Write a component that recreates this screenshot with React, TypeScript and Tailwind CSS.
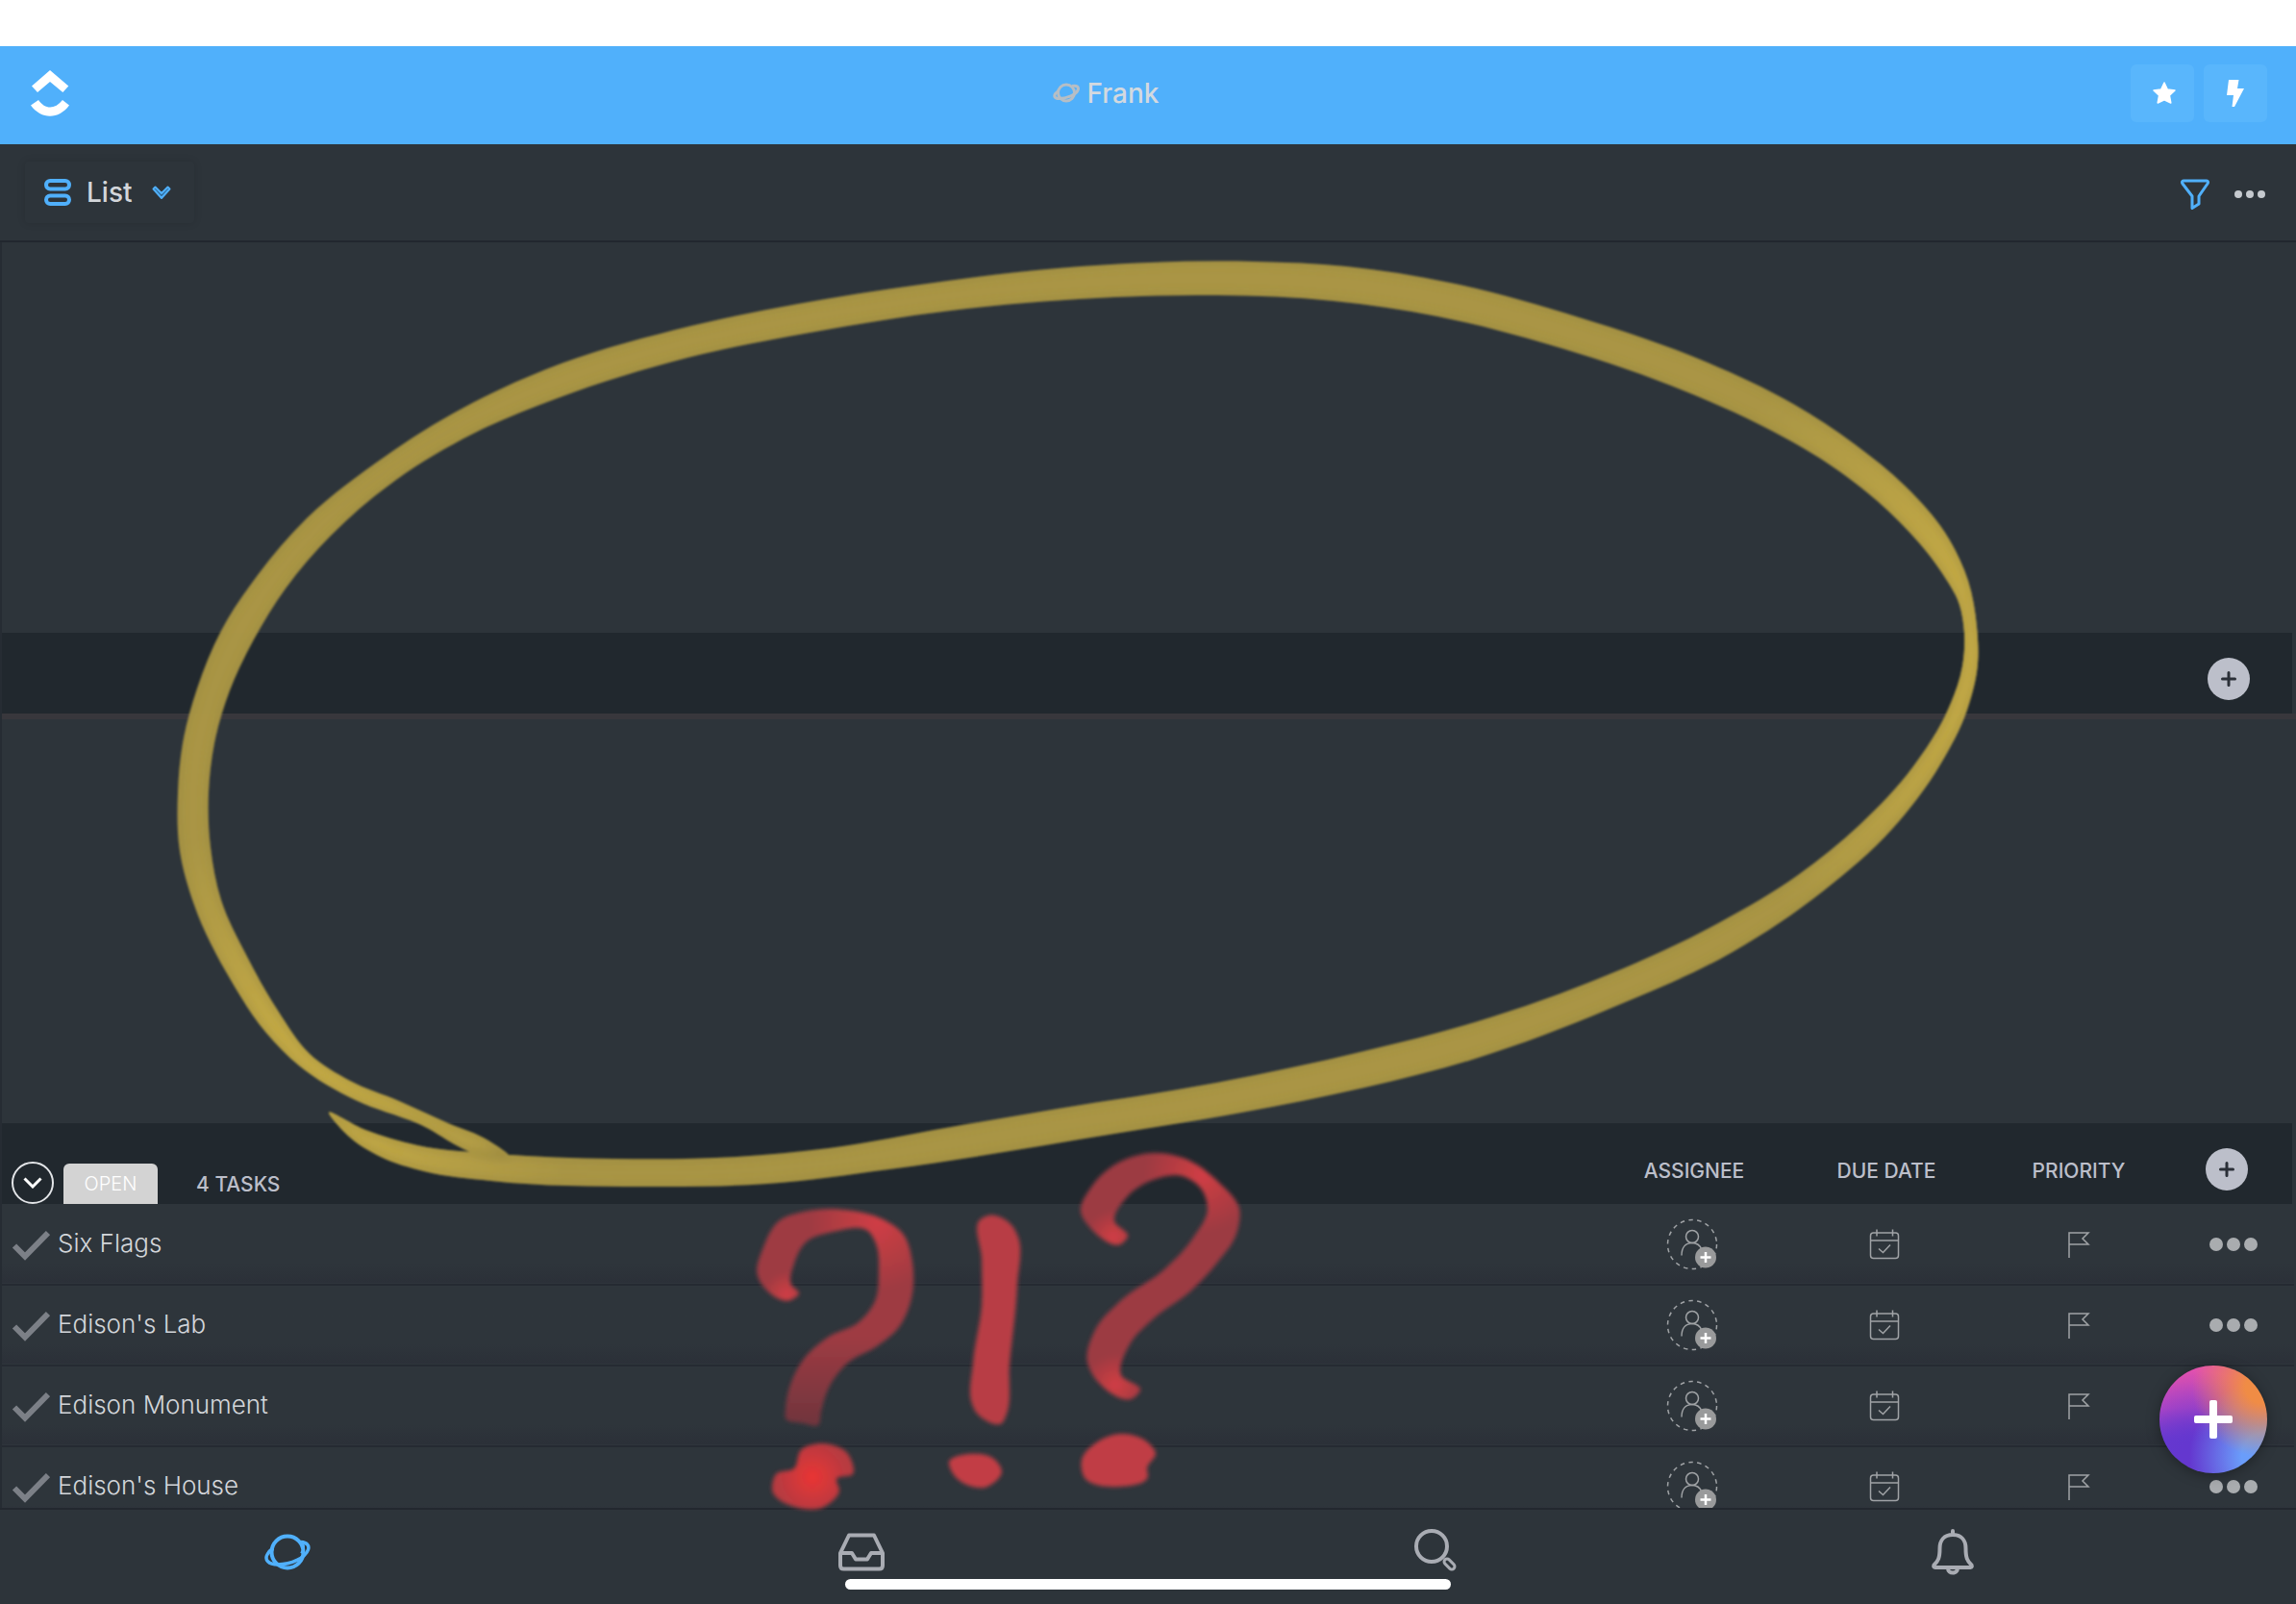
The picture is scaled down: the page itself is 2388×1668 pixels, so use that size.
import { useState } from "react";

type Point = [number, number];

const tasks = ["Six Flags", "Edison's Lab", "Edison Monument", "Edison's House"];

// slope at b, the nearer neighbour counts more
const slope = (a: Point, b: Point, c: Point): Point => {
  const d1 = Math.hypot(b[0] - a[0], b[1] - a[1]);
  const d2 = Math.hypot(c[0] - b[0], c[1] - b[1]);
  const along = (k: 0 | 1) =>
    (((b[k] - a[k]) / d1) * d2 + ((c[k] - b[k]) / d2) * d1) / (d1 + d2);
  return [along(0), along(1)];
};

// closed curve running through every point
const smooth = (p: Point[]) => {
  const n = p.length;
  let d = `M${p[0][0]} ${p[0][1]}`;
  for (let i = 0; i < n; i++) {
    const a = p[(i - 1 + n) % n];
    const b = p[i];
    const c = p[(i + 1) % n];
    const e = p[(i + 2) % n];
    const h = Math.hypot(c[0] - b[0], c[1] - b[1]) / 3;
    const m = slope(a, b, c);
    const k = slope(b, c, e);
    d += ` C${b[0] + m[0] * h} ${b[1] + m[1] * h} ${c[0] - k[0] * h} ${c[1] - k[1] * h} ${c[0]} ${c[1]}`;
  }
  return d + "Z";
};

const loop: Point[] = [
  [342, 1157], [362, 1181], [396, 1203], [441, 1218], [511, 1228], [670, 1234],
  [798, 1231], [925, 1216], [1159, 1179], [1291, 1157], [1419, 1131],
  [1534, 1101], [1674, 1049], [1802, 990], [1897, 926], [1968, 862], [2018, 795],
  [2046, 738], [2057, 690], [2056, 652], [2047, 604], [2023, 554], [1982, 506],
  [1929, 462], [1865, 420], [1776, 377], [1642, 330], [1508, 294], [1400, 277],
  [1304, 272], [1196, 273], [1100, 279], [957, 296], [830, 316], [702, 343],
  [568, 384], [471, 430], [390, 482], [319, 539], [268, 598], [230, 656],
  [205, 716], [190, 773], [185, 824], [187, 885], [202, 941], [240, 1019],
  [277, 1074], [311, 1108], [370, 1144], [434, 1168], [504, 1202], [530, 1203],
  [508, 1186], [466, 1168], [415, 1145], [364, 1124], [322, 1096], [289, 1051],
  [256, 993], [230, 936], [219, 881], [217, 824], [223, 773], [239, 718],
  [264, 665], [297, 612], [344, 557], [412, 499], [492, 451], [580, 414],
  [715, 372], [842, 346], [989, 323], [1159, 309], [1259, 307], [1387, 313],
  [1495, 329], [1610, 358], [1738, 401], [1833, 443], [1913, 490], [1975, 542],
  [2018, 593], [2038, 629], [2043, 658], [2041, 693], [2026, 738], [1990, 797],
  [1934, 858], [1870, 910], [1789, 959], [1674, 1013], [1534, 1063], [1419, 1093],
  [1259, 1127], [1100, 1153], [989, 1172], [862, 1194], [766, 1203], [638, 1205],
  [517, 1200], [434, 1191], [380, 1175],
];

const hookLeft: Point[] = [
  [831, 1345], [822, 1352], [794, 1338], [788, 1327], [794, 1297], [811, 1269],
  [836, 1260], [885, 1259], [916, 1267], [939, 1283], [949, 1313], [948, 1350],
  [935, 1380], [912, 1400], [882, 1417], [862, 1443], [854, 1468], [851, 1482],
  [835, 1480], [817, 1475], [817, 1465], [822, 1440], [836, 1413], [862, 1390],
  [893, 1375], [910, 1353], [914, 1323], [911, 1293], [904, 1281], [866, 1281],
  [838, 1292], [826, 1314], [823, 1336],
];

const bar: Point[] = [
  [1021, 1267], [1028, 1264], [1053, 1275], [1058, 1284], [1058, 1337], [1050, 1420],
  [1046, 1473], [1043, 1479], [1014, 1467], [1011, 1460], [1012, 1417], [1021, 1357],
  [1021, 1310],
];

const hookRight: Point[] = [
  [1173, 1286], [1167, 1293], [1134, 1277], [1124, 1260], [1136, 1233], [1165, 1208],
  [1199, 1199], [1230, 1204], [1268, 1230], [1289, 1257], [1286, 1283], [1266, 1313],
  [1238, 1343], [1200, 1371], [1175, 1398], [1166, 1430], [1186, 1446], [1180, 1453],
  [1138, 1432], [1131, 1417], [1139, 1383], [1165, 1353], [1211, 1320], [1241, 1287],
  [1256, 1257], [1250, 1237], [1230, 1223], [1199, 1227], [1172, 1245], [1159, 1270],
];

const dots: Point[][] = [
  [
    [855, 1501], [882, 1512], [887, 1533], [870, 1538], [873, 1550], [857, 1567],
    [803, 1548], [807, 1533], [826, 1527], [833, 1508],
  ],
  [[987, 1520], [1008, 1512], [1036, 1519], [1042, 1530], [1027, 1546], [993, 1535]],
  [
    [1167, 1491], [1195, 1501], [1202, 1511], [1193, 1527], [1194, 1535], [1165, 1546],
    [1127, 1535], [1125, 1518], [1142, 1499],
  ],
];

function Glow({ id, color, cx, cy, r }: { id: string; color: string; cx: number; cy: number; r: number }) {
  return (
    <radialGradient id={id} gradientUnits="userSpaceOnUse" cx={cx} cy={cy} r={r}>
      <stop offset="0" stopColor={color} />
      <stop offset="0.3" stopColor={color} stopOpacity="0.7" />
      <stop offset="1" stopColor={color} stopOpacity="0" />
    </radialGradient>
  );
}

function Scribble() {
  const ring = smooth(loop);
  const left = smooth(hookLeft);
  const right = smooth(hookRight);
  return (
    <svg
      className="absolute inset-0 w-full h-full pointer-events-none"
      viewBox="0 0 2388 1668"
      preserveAspectRatio="none"
      aria-hidden="true"
    >
      <defs>
        <filter id="soft">
          <feGaussianBlur stdDeviation="1.2" />
        </filter>
        <filter id="softer">
          <feGaussianBlur stdDeviation="2" />
        </filter>
        <filter id="core">
          <feGaussianBlur stdDeviation="4" />
        </filter>
        <clipPath id="ring">
          <path d={ring} />
        </clipPath>
        <Glow id="g1" color="#c9ae46" cx={2060} cy={670} r={340} />
        <Glow id="g2" color="#c9ae46" cx={320} cy={1130} r={280} />
        <Glow id="r1" color="#cf3d44" cx={912} cy={1272} r={70} />
        <Glow id="r2" color="#cf3d44" cx={818} cy={1346} r={24} />
        <Glow id="r3" color="#d03d44" cx={1250} cy={1222} r={60} />
        <Glow id="r4" color="#d03d44" cx={1158} cy={1286} r={28} />
        <Glow id="r5" color="#d03d44" cx={1160} cy={1440} r={32} />
        <Glow id="r6" color="#ea3534" cx={845} cy={1536} r={36} />
        <linearGradient id="fade" gradientUnits="userSpaceOnUse" x1="0" y1="1390" x2="0" y2="1485">
          <stop offset="0" stopColor="#9e3b43" />
          <stop offset="1" stopColor="#6f353d" />
        </linearGradient>
      </defs>
      <g filter="url(#soft)">
        <path d={ring} fill="#ad9945" fillOpacity="0.97" />
        <path d={ring} fill="url(#g1)" />
        <path d={ring} fill="url(#g2)" />
        <g clipPath="url(#ring)">
          <path d={ring} fill="none" stroke="#8f7f3c" strokeOpacity="0.45" strokeWidth="6" filter="url(#core)" />
        </g>
      </g>
      <g filter="url(#softer)">
        <path d={left} fill="url(#fade)" />
        <path d={left} fill="url(#r1)" />
        <path d={left} fill="url(#r2)" />
        <path d={smooth(bar)} fill="#b83d45" />
        <path d={right} fill="#9c3a42" />
        <path d={right} fill="url(#r3)" />
        <path d={right} fill="url(#r4)" />
        <path d={right} fill="url(#r5)" />
        <path d={smooth(dots[0])} fill="#b83a40" />
        <path d={smooth(dots[0])} fill="url(#r6)" />
        <path d={smooth(dots[1])} fill="#c23e45" />
        <path d={smooth(dots[2])} fill="#c03e45" />
      </g>
    </svg>
  );
}

function SpacesIcon() {
  return (
    <svg className="w-12 h-10" viewBox="0 0 48 40" fill="none" stroke="currentColor">
      <circle cx="24" cy="20" r="16.500" strokeWidth="4" />
      <path
        d="M38 9.500C44 10 47 13 45.500 17.500 42.500 26 28 33 14 33 4 33 0 28 3 22.500 4 20.500 6 18 9 16"
        strokeWidth="3.500"
      />
      <path d="M38 9.500C42 12 42 16 38 21M9 16C7 21 8 27 12 31" strokeWidth="2" />
    </svg>
  );
}

function PlanetIcon() {
  return (
    <svg className="w-7 h-6" viewBox="0 0 28 24" fill="none" stroke="#b6bec5" strokeWidth="3">
      <circle cx="14" cy="11.500" r="8.500" />
      <path d="M20 4.500C25 3.500 27.500 5.500 26 9 23.500 14 14 17.500 6.500 17.500 2 17.500.500 15 3 12L6 9.500" />
    </svg>
  );
}

function AddColumn({ label }: { label: string }) {
  return (
    <button
      aria-label={label}
      className="w-11 h-11 rounded-full bg-[#bcbfca] inline-flex items-center justify-center"
    >
      <svg className="w-4 h-4" viewBox="0 0 16 16" stroke="#2b3038" strokeWidth="3" strokeLinecap="round">
        <path d="M8 1.500v13M1.500 8h13" />
      </svg>
    </button>
  );
}

function Assignee() {
  return (
    <svg className="w-14 h-14" viewBox="0 0 56 56" fill="none">
      <circle cx="28" cy="28" r="25.500" stroke="#a0a3a6" strokeWidth="1.500" strokeDasharray="4.500 4.400" />
      <circle cx="28" cy="20" r="6.500" stroke="#a0a3a6" strokeWidth="1.500" />
      <path d="M17 39.500c0-8 4-13 11-13 5 0 8 2 10 7" stroke="#a0a3a6" strokeWidth="1.500" />
      <circle cx="42" cy="41.500" r="11" fill="#999a9b" />
      <path d="M42 36v11M36.500 41.500h11" stroke="#fff" strokeWidth="2.500" />
    </svg>
  );
}

function TaskRow({ name }: { name: string }) {
  return (
    <tr className="h-21 bg-linear-to-b from-[#2e353b] from-75% to-[#2b3038] border-b-2 border-[#252a32]">
      <td className="pl-[10px]">
        <div className="flex items-center gap-2 pb-[2px]">
          <button aria-label={`Complete ${name}`}>
            <svg className="w-10 h-8 mt-1" viewBox="0 0 40 32" fill="none" stroke="#7c8087" strokeWidth="6">
              <path d="M3 16.500 14 27.500 38 3" />
            </svg>
          </button>
          <span className="text-[26px] leading-8 font-light text-[#d3d6da]">{name}</span>
        </div>
      </td>
      <td className="text-center">
        <button aria-label="Assign" className="block mx-auto">
          <Assignee />
        </button>
      </td>
      <td>
        <button aria-label="Set due date" className="block mx-auto">
          <svg className="w-8 h-8" viewBox="0 0 32 32" fill="none" stroke="#a0a3a6" strokeWidth="1.500">
            <rect x="1.500" y="4" width="29" height="26.500" rx="3" />
            <path d="M1.500 12h29M8 .5v7M24.500.5v7M10 20.500l4.500 4 7.500-8" />
          </svg>
        </button>
      </td>
      <td className="pl-1">
        <button aria-label="Set priority" className="block mx-auto">
          <svg className="w-6 h-7" viewBox="0 0 24 28" fill="none" stroke="#a0a3a6" strokeWidth="1.500">
            <path d="M2 28V2h20l-6 6 6 6H2" />
          </svg>
        </button>
      </td>
      <td>
        <button aria-label="More" className="flex gap-1 mx-auto">
          <span className="w-[14px] h-[14px] rounded-full bg-[#a9acaf]" />
          <span className="w-[14px] h-[14px] rounded-full bg-[#a9acaf]" />
          <span className="w-[14px] h-[14px] rounded-full bg-[#a9acaf]" />
        </button>
      </td>
    </tr>
  );
}

function App() {
  const [open, setOpen] = useState(true);
  return (
    <div className="relative h-screen flex flex-col overflow-hidden bg-[#2d343a] font-['Inter',sans-serif]">
      <div className="h-12 shrink-0 bg-white" />
      <header className="h-[102px] shrink-0 bg-[#50b0fb] flex items-center pl-8 pr-[30px] pb-1">
        <button aria-label="Home">
          <svg className="w-10 h-12" viewBox="0 0 40 48" fill="#fff">
            <path d="M20 0 39.300 16.500 33.300 23 20 12 7 23 1 16.500z" />
            <path d="M8 31C15 41 25 41 33 31L40 36.500C29 51.500 11 51.500 0 36.500z" />
          </svg>
        </button>
        <div className="flex-1 flex items-center justify-center gap-2 pl-3 text-[#d3d9df]">
          <PlanetIcon />
          <h1 className="text-[28px] leading-8 font-medium">Frank</h1>
        </div>
        <div className="flex gap-[10px]">
          <button
            aria-label="Favorites"
            className="w-[66px] h-[60px] pl-1 rounded-md bg-[#59b6fc] flex items-center justify-center"
          >
            <svg
              className="w-6 h-6"
              viewBox="0 0 24 24"
              fill="#fff"
              stroke="#fff"
              strokeWidth="1.500"
              strokeLinejoin="round"
            >
              <path d="M12 1l3.300 7 7.700 1-5.600 5.300 1.400 7.700L12 18.800 5.200 22l1.400-7.700L1 9l7.700-1z" />
            </svg>
          </button>
          <button
            aria-label="Quick actions"
            className="w-[66px] h-[60px] rounded-md bg-[#59b6fc] flex items-center justify-center"
          >
            <svg className="w-[18px] h-7" viewBox="0 0 18 28" fill="#fff">
              <path d="M2 0h10.500L11 9h7L8 28H5.500l1.500-12H0z" />
            </svg>
          </button>
        </div>
      </header>

      <div className="h-[102px] shrink-0 flex items-center justify-between pl-[26px] pr-8 border-b-2 border-[#21272e]">
        <button className="flex items-center h-16 w-44 pl-5 rounded shadow-[0_0_8px_rgba(0,0,0,0.12)]">
          <svg className="w-7 h-7" viewBox="0 0 28 28" fill="none" stroke="#50b0fb" strokeWidth="4">
            <rect x="2" y="2" width="24" height="8.500" rx="4.200" />
            <rect x="2" y="17.500" width="24" height="8.500" rx="4.200" />
          </svg>
          <span className="ml-4 text-[28px] leading-8 font-medium text-[#d3d6da]">List</span>
          <svg
            className="ml-5 w-5 h-4"
            viewBox="0 0 20 16"
            fill="#2f6b99"
            stroke="#50b0fb"
            strokeWidth="2"
            strokeLinejoin="round"
          >
            <path d="M1.500 4.500 3.500 2.500 10 9l6.500-6.500 2 2L10 14z" />
          </svg>
        </button>
        <div className="flex items-center gap-[26px] pt-1">
          <button aria-label="Filter">
            <svg
              className="w-[30px] h-8"
              viewBox="0 0 30 32"
              fill="none"
              stroke="#50b0fb"
              strokeWidth="3"
              strokeLinejoin="round"
            >
              <path d="M3 2h24c1.500 0 2 1.500 1 3L19 18v8l-7 4.500V18L2 5C1 3.500 1.500 2 3 2z" />
            </svg>
          </button>
          <button aria-label="View options" className="flex gap-1">
            <span className="w-2 h-2 rounded-full bg-[#c5c9ce]" />
            <span className="w-2 h-2 rounded-full bg-[#c5c9ce]" />
            <span className="w-2 h-2 rounded-full bg-[#c5c9ce]" />
          </button>
        </div>
      </div>

      <main className="flex-1 min-h-0 overflow-hidden border-l-2 border-[#262c33]">
        <div className="h-[406px]" />
        <div className="h-21 mr-1 pr-11 bg-[#21282e] flex items-center justify-end pt-3">
          <AddColumn label="Add column" />
        </div>
        <div className="h-[426px] border-t-6 border-[#38373c]" />
        <table className="w-full table-fixed border-collapse">
          <colgroup>
            <col />
            <col className="w-[200px]" />
            <col className="w-[200px]" />
            <col className="w-[200px]" />
            <col className="w-[126px]" />
          </colgroup>
          <thead>
            <tr className="h-21 bg-[#21282e] text-[21px] leading-6 text-[#bcbfca]">
              <th className="align-bottom">
                <div className="flex items-end pl-[10px]">
                  <button
                    aria-label="Toggle group"
                    aria-expanded={open}
                    onClick={() => setOpen(!open)}
                    className="w-11 h-11 rounded-full border-2 border-[#e3e5e8] flex items-center justify-center"
                  >
                    <svg className="w-5 h-3" viewBox="0 0 20 12" fill="none" stroke="#fff" strokeWidth="3">
                      <path d="M1.500 1.500 10 10l8.500-8.500" />
                    </svg>
                  </button>
                  <span className="ml-[10px] w-[98px] h-[42px] rounded-t-md bg-[#d3d3d3] text-white text-[20px] font-light flex items-center justify-center">
                    OPEN
                  </span>
                  <span className="ml-10 h-8 font-medium">4 TASKS</span>
                </div>
              </th>
              <th className="font-medium pt-4 pl-1">ASSIGNEE</th>
              <th className="font-medium pt-4 pl-1">DUE DATE</th>
              <th className="font-medium pt-4 pl-1">PRIORITY</th>
              <th className="pt-3 pr-3 border-r-4 border-[#2d343a]">
                <div className="flex justify-center">
                  <AddColumn label="Add column to Open" />
                </div>
              </th>
            </tr>
          </thead>
          <tbody>{open && tasks.map((name) => <TaskRow key={name} name={name} />)}</tbody>
        </table>
      </main>

      <nav className="h-25 shrink-0 grid grid-cols-4 justify-items-center items-start pt-5 border-t-2 border-[#23282f] text-[#a9acb3]">
        <button aria-label="Spaces" className="pt-1 text-[#50b0fb]">
          <SpacesIcon />
        </button>
        <button aria-label="Inbox" className="pt-1">
          <svg
            className="w-12 h-10"
            viewBox="0 0 48 40"
            fill="none"
            stroke="currentColor"
            strokeWidth="4"
            strokeLinejoin="round"
          >
            <path d="M2 21 11 2.500h26L46 21v13q0 3.500-3.500 3.500h-37Q2 37.500 2 34zM2 21h12l4 6.500h12l4-6.500h12" />
          </svg>
        </button>
        <button aria-label="Search">
          <svg className="w-11 h-11" viewBox="0 0 44 44" fill="none" stroke="currentColor">
            <circle cx="18" cy="18" r="16" strokeWidth="4" />
            <rect
              x="30"
              y="33.500"
              width="13"
              height="6"
              rx="3"
              strokeWidth="3"
              transform="rotate(45 36.500 36.500)"
            />
          </svg>
        </button>
        <div className="pr-[118px]">
          <button aria-label="Notifications">
            <svg
              className="w-11 h-12"
              viewBox="0 0 44 48"
              fill="none"
              stroke="currentColor"
              strokeWidth="4"
              strokeLinecap="round"
              strokeLinejoin="round"
            >
              <path d="M22 2v4M22 6C13 6 8.500 12 8.500 20 8.500 30 7 33 2.500 37.500 2 39 2 40 3.500 40h37c1.500 0 1.500-1 1-2.500C37 33 35.500 30 35.500 20 35.500 12 31 6 22 6z" />
              <path d="M17 41c0 6 10 6 10 0" />
            </svg>
          </button>
        </div>
      </nav>

      <Scribble />

      <button
        aria-label="New task"
        className="absolute right-[30px] bottom-[136px] w-28 h-28 rounded-full overflow-hidden flex items-center justify-center bg-[radial-gradient(circle_at_95%_20%,#f08c45_12%,transparent_52%),radial-gradient(circle_at_100%_85%,#6a9dfa_18%,transparent_55%),radial-gradient(circle_at_35%_85%,#6437cf_15%,transparent_75%),linear-gradient(to_bottom,#e050b0_15%,#d24bc0_40%,#6a3ad0_70%)] shadow-[0_2px_14px_rgba(0,0,0,0.35)]"
      >
        <svg className="w-10 h-10" viewBox="0 0 40 40" fill="#fff">
          <rect x="16" width="8" height="40" rx="2" />
          <rect y="16" width="40" height="8" rx="2" />
        </svg>
      </button>
      <div className="absolute bottom-[15px] left-1/2 -translate-x-1/2 w-[630px] h-[11px] rounded-full bg-white" />
    </div>
  );
}

export default App;
